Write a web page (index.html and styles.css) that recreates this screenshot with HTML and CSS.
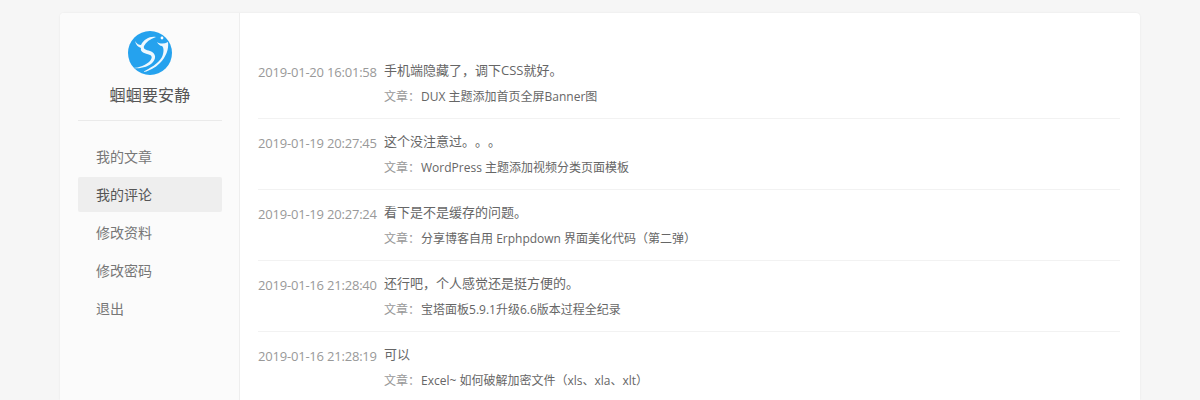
FILE: index.html
```html
<!DOCTYPE html>
<html lang="en">
  <head>
    <meta charset="UTF-8" />
    <title>我的评论</title>
    <link rel="stylesheet" href="styles.css">
  </head>
  <body>
    <div class="container">
      <div class="sidebar">
        <div class="user">
          <svg class="avatar" width="44" height="44" viewBox="0 0 44 44">
            <circle cx="22" cy="22" r="22" fill="#25a2ee"></circle>
            <path d="M7 10 C8 14 10 16 13 17 C12 20 15 22 19 23 C24 24 25 26 22 30 C18 34 11 37 5 37 C12 38 21 36 25 31 C29 26 27 22 22 20 C18 19 15 18 16 15 C18 11 22 8 28 6 C22 5 16 8 13 14 C11 14 9 13 7 10 Z" fill="#fff" opacity="0.92"></path>
            <path d="M29 11 C32 13 36 13 40 11 C41 18 38 26 32 32 C27 37 21 40 15 41 C22 37 30 33 34 26 C36 21 36 17 34 15 C32 15 30 13 29 11 Z" fill="#fff" opacity="0.92"></path>
            <circle cx="34" cy="7" r="1.4" fill="#fff"></circle>
          </svg>
          <div class="user-name">蝈蝈要安静</div>
        </div>
        <ul class="menu">
          <li>我的文章</li>
          <li class="active">我的评论</li>
          <li>修改资料</li>
          <li>修改密码</li>
          <li>退出</li>
        </ul>
      </div>
      <div class="main">
        <ul class="comments">
          <li>
            <time>2019-01-20 16:01:58</time>
            <div class="comment-body">
              <p>手机端隐藏了，调下CSS就好。</p>
              <div class="post-title"><span>文章：</span>DUX 主题添加首页全屏Banner图</div>
            </div>
          </li>
          <li>
            <time>2019-01-19 20:27:45</time>
            <div class="comment-body">
              <p>这个没注意过。。。</p>
              <div class="post-title"><span>文章：</span>WordPress 主题添加视频分类页面模板</div>
            </div>
          </li>
          <li>
            <time>2019-01-19 20:27:24</time>
            <div class="comment-body">
              <p>看下是不是缓存的问题。</p>
              <div class="post-title"><span>文章：</span>分享博客自用 Erphpdown 界面美化代码（第二弹）</div>
            </div>
          </li>
          <li>
            <time>2019-01-16 21:28:40</time>
            <div class="comment-body">
              <p>还行吧，个人感觉还是挺方便的。</p>
              <div class="post-title"><span>文章：</span>宝塔面板5.9.1升级6.6版本过程全纪录</div>
            </div>
          </li>
          <li>
            <time>2019-01-16 21:28:19</time>
            <div class="comment-body">
              <p>可以</p>
              <div class="post-title"><span>文章：</span>Excel~ 如何破解加密文件（xls、xla、xlt）</div>
            </div>
          </li>
        </ul>
      </div>
    </div>
  </body>
</html>
```

FILE: styles.css
```css
html, body {
  height: 100%;
  overflow: hidden;
}
body {
  margin: 0;
  padding-top: 13px;
  box-sizing: border-box;
  background: #f6f6f6;
  color: #555;
  font-family: "Open Sans", "Noto Sans CJK SC", sans-serif;
  font-size: 13px;
  text-spacing-trim: space-all;
}
ul {
  list-style-type: none;
  margin: 0;
  padding: 0;
}
.container {
  display: flex;
  width: 1080px;
  height: 387px;
  margin: 0 auto;
  background: #fff;
  border-radius: 4px 4px 0 0;
  box-shadow: 0 0 2px rgba(0, 0, 0, 0.08);
}
.sidebar {
  width: 180px;
  flex-shrink: 0;
  box-sizing: border-box;
  padding: 18px 17px 0 18px;
  background: #fbfbfb;
  border-right: 1px solid #eee;
  border-radius: 4px 0 0 0;
}
.user {
  display: flex;
  flex-direction: column;
  align-items: center;
  padding-bottom: 13px;
  border-bottom: 1px solid #eaeaea;
  margin-bottom: 18px;
}
.avatar {
  display: block;
}
.user-name {
  margin-top: 8px;
  font-size: 16px;
  line-height: 24px;
  letter-spacing: 0.2px;
}
.menu li {
  height: 35px;
  line-height: 35px;
  margin-bottom: 3px;
  padding-left: 18px;
  border-radius: 2px;
  font-size: 14px;
  color: #777;
}
.menu li.active {
  background: #eee;
  color: #555;
}
.main {
  flex: 1;
  padding: 35px 20px 0 18px;
  overflow: hidden;
}
.comments li {
  display: flex;
  height: 70px;
  border-bottom: 1px solid #f2f2f2;
}
.comments time {
  width: 126px;
  flex-shrink: 0;
  padding-top: 14px;
  line-height: 20px;
  color: #999;
  font-size: 13px;
  letter-spacing: -0.2px;
}
.comment-body {
  padding-top: 12px;
  overflow: hidden;
}
.comment-body p {
  margin: 0;
  line-height: 20px;
  font-size: 13px;
  color: #666;
}
.post-title {
  margin-top: 7px;
  line-height: 20px;
  font-size: 12px;
  color: #666;
}
.post-title span {
  margin-right: 1px;
  color: #999;
}
```
